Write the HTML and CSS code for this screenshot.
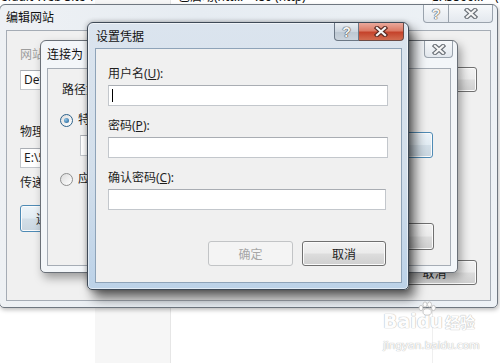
FILE: index.html
```html
<!DOCTYPE html>
<html lang="zh-CN">
<head>
<meta charset="UTF-8">
<meta name="viewport" content="width=device-width, initial-scale=1.0">
<title>设置凭据</title>
<link rel="stylesheet" href="styles.css">
</head>
<body>
    <!-- List view behind the dialogs -->
    <div class="listview">
        <div class="lv-col lv-col-a"></div>
        <div class="lv-col lv-col-b"></div>
        <div class="lv-col lv-col-c"></div>
        <div class="lv-col lv-col-d"></div>
    </div>
    <div class="lv-row">
        <span class="cell cell-name">Default Web Site</span>
        <span class="cell cell-id">1</span>
        <span class="cell cell-state">已启动(htt...</span>
        <span class="cell cell-bind">:80 (http)</span>
        <span class="cell cell-path">E:\5566...</span>
        <span class="cell">(</span>
    </div>

    <!-- 编辑网站 -->
    <div class="win win-edit">
        <div class="titlebar">
            <span class="title">编辑网站</span>
            <div class="controls">
                <span class="ctl ctl-help">?</span>
                <span class="ctl ctl-close">
                    <svg width="14" height="11" viewBox="0 0 14 11"><path d="M3 2 L11 9 M11 2 L3 9" class="x-outer"/><path d="M3 2 L11 9 M11 2 L3 9" class="x-inner"/></svg>
                </span>
            </div>
        </div>
        <div class="panel panel-edit">
            <div class="lbl lbl-dim">网站名称(<u>S</u>):</div>
            <div class="row row-site">
                <div class="textbox tb-site">Default Web Site</div>
                <button class="btn btn-pick">选择(<u>E</u>)...</button>
            </div>
            <div class="lbl lbl-path">物理路径(<u>P</u>):</div>
            <div class="textbox tb-path">E:\5566\web</div>
            <div class="lbl lbl-pass">传递身份验证</div>
            <div class="row row-connect">
                <button class="btn btn-focus btn-connect">连接为(<u>C</u>)...</button>
                <button class="btn btn-test">测试设置(<u>G</u>)...</button>
            </div>
            <div class="actions">
                <button class="btn btn-wide">确定</button>
                <button class="btn btn-wide">取消</button>
            </div>
        </div>
    </div>

    <!-- 连接为 -->
    <div class="win win-connect">
        <div class="titlebar titlebar-connect">
            <span class="title">连接为</span>
            <div class="controls">
                <span class="ctl ctl-close ctl-solo">
                    <svg width="14" height="11" viewBox="0 0 14 11"><path d="M3 2 L11 9 M11 2 L3 9" class="x-outer"/><path d="M3 2 L11 9 M11 2 L3 9" class="x-inner"/></svg>
                </span>
            </div>
        </div>
        <div class="panel panel-connect">
            <div class="lbl">路径凭据:</div>
            <div class="radio-row radio-first">
                <span class="radio radio-on"></span>
                <span>特定用户(<u>S</u>):</span>
            </div>
            <div class="row row-user">
                <div class="textbox tb-user"></div>
                <button class="btn btn-focus btn-set">设置(<u>E</u>)...</button>
            </div>
            <div class="radio-row radio-second">
                <span class="radio"></span>
                <span>应用程序用户(通过身份验证)(<u>A</u>)</span>
            </div>
            <div class="actions">
                <button class="btn btn-wide">确定</button>
                <button class="btn btn-wide">取消</button>
            </div>
        </div>
    </div>

    <!-- 设置凭据 (active) -->
    <div class="win win-cred">
        <div class="titlebar">
            <span class="title title-cred">设置凭据</span>
            <div class="controls">
                <span class="ctl ctl-help ctl-help-active">?</span>
                <span class="ctl ctl-close ctl-red">
                    <svg width="14" height="11" viewBox="0 0 14 11"><path d="M3 2 L11 9 M11 2 L3 9" class="x-outer x-outer-red"/><path d="M3 2 L11 9 M11 2 L3 9" class="x-inner"/></svg>
                </span>
            </div>
        </div>
        <div class="panel panel-cred">
            <div class="lbl">用户名(<u>U</u>):</div>
            <div class="textbox tb-cred"><span class="caret"></span></div>
            <div class="lbl lbl-next">密码(<u>P</u>):</div>
            <div class="textbox tb-cred"></div>
            <div class="lbl lbl-next">确认密码(<u>C</u>):</div>
            <div class="textbox tb-cred tb-confirm"></div>
            <div class="actions actions-cred">
                <button class="btn btn-wide" disabled>确定</button>
                <button class="btn btn-wide">取消</button>
            </div>
        </div>
    </div>

    <!-- Watermark -->
    <div class="watermark">
        <div class="wm-logo">
            <span class="wm-bai">Bai</span>
            <span class="wm-du">du
                <svg class="wm-paw" width="20" height="15" viewBox="0 0 20 15">
                    <ellipse cx="4" cy="7" rx="2" ry="2.6"/>
                    <ellipse cx="8" cy="3.5" rx="2" ry="2.6"/>
                    <ellipse cx="12.5" cy="3.5" rx="2" ry="2.6"/>
                    <ellipse cx="16.5" cy="7" rx="2" ry="2.6"/>
                    <ellipse cx="10.2" cy="11" rx="4.2" ry="3.2"/>
                </svg>
            </span>
            <span class="wm-jy">经验</span>
        </div>
        <div class="wm-url">jingyan.baidu.com</div>
    </div>
</body>
</html>
```

FILE: styles.css
```css
/* General Reset */
* {
    margin: 0;
    padding: 0;
    box-sizing: border-box;
}

body {
    width: 500px;
    height: 363px;
    position: relative;
    overflow: hidden;
    background-color: #fff;
    font-family: "Noto Sans", "Noto Sans CJK SC", sans-serif;
    font-size: 12px;
    line-height: 16px;
    color: #1e1e1e;
}

u {
    text-decoration: underline;
    text-underline-offset: 1px;
}

/* List view behind */
.listview {
    position: absolute;
    top: 0;
    left: 0;
    right: 0;
    bottom: 0;
    display: flex;
}

.lv-col {
    height: 100%;
}

.lv-col-a {
    width: 95px;
}

.lv-col-b {
    width: 76px;
    background-color: #f6f6f6;
    border-right: 1px solid #e6e6e6;
}

.lv-col-c {
    width: 262px;
    border-right: 1px solid #efefef;
}

.lv-col-d {
    flex: 1;
}

.lv-row {
    position: absolute;
    top: -11px;
    left: -8px;
    display: flex;
    white-space: nowrap;
    color: #111;
}

.cell-name { width: 96px; }
.cell-id { width: 90px; }
.cell-state { width: 77px; }
.cell-bind { width: 177px; }
.cell-path { width: 63px; }

/* Windows */
.win {
    position: absolute;
    display: flex;
    flex-direction: column;
    border: 1px solid #6f7780;
    border-radius: 6px 6px 5px 5px;
}

.win-edit {
    left: -1px;
    top: 4px;
    width: 499px;
    height: 304px;
    background: linear-gradient(90deg, #eef1f4, #e6ecf2 40%, #eef2f6);
    box-shadow: 1px 2px 4px rgba(0, 0, 0, 0.25);
}

.win-connect {
    left: 40px;
    top: 40px;
    width: 418px;
    height: 233px;
    background-color: #f3f6f9;
    border-color: #6a7078;
    box-shadow: 3px 5px 10px rgba(0, 0, 0, 0.35);
}

.win-cred {
    left: 87px;
    top: 22px;
    width: 322px;
    height: 268px;
    border-color: #3f4a57;
    background: linear-gradient(180deg, #dbe4ee 0%, #d3dfeb 55%, #bcd2e8 100%);
    box-shadow: inset 0 0 0 1px rgba(255, 255, 255, 0.55), 6px 8px 12px rgba(0, 0, 0, 0.6), 0 0 5px rgba(0, 0, 0, 0.3);
}

.titlebar {
    display: flex;
    height: 25px;
    flex: none;
}

.titlebar-connect {
    height: 27px;
}

.title {
    align-self: center;
    padding-left: 6px;
    color: #111;
}

.title-cred {
    padding-left: 8px;
    padding-top: 2px;
}

.controls {
    display: flex;
    align-self: flex-start;
    margin-left: auto;
    margin-right: 4px;
}

.ctl {
    display: flex;
    justify-content: center;
    align-items: center;
    height: 18px;
    border: 1px solid #9aa3ad;
    border-top: none;
    background: linear-gradient(#f7f9fb, #e3e8ee);
}

.ctl-help {
    width: 26px;
    border-radius: 0 0 0 4px;
    font-family: "Liberation Sans", sans-serif;
    font-size: 14px;
    font-weight: bold;
    color: #f4f4f4;
    text-shadow: 0 0 1px #4d4d4d, 0 0 1px #4d4d4d, 0 0 1px #4d4d4d;
}

.ctl-close {
    width: 44px;
    border-left: none;
    border-radius: 0 0 4px 0;
}

.ctl-solo {
    width: 29px;
    height: 17px;
    border-left: 1px solid #9aa3ad;
    border-radius: 0 0 4px 4px;
}

.ctl-help-active {
    width: 25px;
    border-color: #6b7785;
    background: linear-gradient(#e9eef3, #cdd6df 50%, #bcc7d2 51%, #cbd4dd);
}

.ctl-red {
    width: 45px;
    border-color: #6b4a45;
    background: linear-gradient(#eaa99c 0%, #dc7b66 45%, #c5432b 55%, #d26c50 100%);
}

.x-outer {
    fill: none;
    stroke: #6a7077;
    stroke-width: 4.4;
    stroke-linecap: square;
}

.x-outer-red {
    stroke: #5b2a22;
}

.x-inner {
    fill: none;
    stroke: #f6f6f6;
    stroke-width: 2.2;
    stroke-linecap: square;
}

/* Content panels */
.panel {
    flex: 1;
    display: flex;
    flex-direction: column;
    margin: 0 6px 6px 6px;
    background-color: #f0f0f0;
    border: 1px solid #a5acb5;
}

.panel-edit {
    padding: 16px 13px 15px 13px;
}

.panel-connect {
    padding: 13px 16px 15px 14px;
}

.panel-cred {
    margin-left: 7px;
    padding: 17px 15px 16px 12px;
    border-color: #8ea3b8;
}

.lbl {
    white-space: nowrap;
}

.lbl-dim {
    color: #9d9d9d;
}

.lbl-path {
    margin-top: 32px;
}

.lbl-pass {
    margin-top: 7px;
}

.lbl-next {
    margin-top: 12px;
}

.row {
    display: flex;
    align-items: center;
}

.row-site {
    margin-top: 4px;
}

.row-connect {
    margin-top: 14px;
    gap: 8px;
}

.row-user {
    margin-top: 4px;
    margin-left: 18px;
    gap: 8px;
}

.textbox {
    display: flex;
    align-items: center;
    height: 21px;
    padding-left: 3px;
    background-color: #fff;
    border: 1px solid #c3c7cc;
    border-top-color: #a9adb3;
    white-space: nowrap;
    overflow: hidden;
}

.tb-site {
    width: 200px;
    height: 20px;
}

.tb-path {
    width: 200px;
    height: 20px;
    margin-top: 8px;
}

.tb-user {
    width: 245px;
    height: 21px;
}

.tb-cred {
    width: 280px;
    margin-top: 3px;
}

.tb-confirm {
    width: 278px;
}

.caret {
    width: 1px;
    height: 13px;
    background-color: #000;
}

/* Buttons */
.btn {
    height: 25px;
    font-family: inherit;
    font-size: 12px;
    color: #1e1e1e;
    border: 1px solid #707070;
    border-radius: 3px;
    background: linear-gradient(#f2f2f2 0%, #ebebeb 49%, #dddddd 51%, #cfcfcf 100%);
    box-shadow: inset 0 0 0 1px #fbfbfb;
    white-space: nowrap;
}

.btn:disabled {
    color: #a6a6a6;
    border-color: #c2c4c6;
    background: #f4f4f4;
    box-shadow: none;
}

.btn-focus {
    border-color: #4f8bb5;
    background: linear-gradient(#edf4f9 0%, #e2ecf3 49%, #d3dfe8 51%, #c9d6e0 100%);
}

.btn-pick {
    width: 112px;
    margin-left: auto;
    padding-right: 30px;
}

.btn-connect {
    width: 76px;
    height: 27px;
    padding-left: 15px;
    text-align: left;
    overflow: hidden;
}

.btn-test {
    width: 96px;
    height: 27px;
}

.btn-set {
    width: 100px;
    height: 26px;
    padding-right: 24px;
}

.btn-wide {
    width: 85px;
}

.actions {
    display: flex;
    justify-content: flex-end;
    gap: 8px;
    margin-top: auto;
}

.panel-connect .actions .btn {
    height: 27px;
    width: 84px;
}

.actions-cred {
    gap: 9px;
}

.actions-cred .btn:last-child {
    width: 84px;
}

/* Radios */
.radio-row {
    display: flex;
    align-items: center;
    gap: 5px;
    margin-left: -2px;
    white-space: nowrap;
}

.radio-first {
    margin-top: 14px;
}

.radio-second {
    margin-top: 13px;
}

.radio {
    width: 13px;
    height: 13px;
    flex: none;
    display: flex;
    justify-content: center;
    align-items: center;
    border: 1px solid #8e8f8f;
    border-radius: 50%;
    background: linear-gradient(135deg, #dcdcdc, #ffffff);
}

.radio-on {
    border-color: #2c628b;
}

.radio-on::after {
    content: "";
    width: 5px;
    height: 5px;
    border-radius: 50%;
    background: radial-gradient(circle at 35% 35%, #8bc4ea, #1c5a8c);
}

/* Watermark */
.watermark {
    position: absolute;
    left: 383px;
    top: 304px;
    color: #fdfdfd;
    text-shadow: 0 0 1px #b9b9b9, 0 0 1px #b9b9b9;
}

.wm-logo {
    display: flex;
    align-items: flex-end;
    height: 28px;
    font-family: "DejaVu Sans", sans-serif;
    font-weight: bold;
}

.wm-bai,
.wm-du {
    font-size: 19px;
    line-height: 22px;
}

.wm-du {
    position: relative;
    letter-spacing: -1px;
}

.wm-paw {
    position: absolute;
    left: 0;
    top: -9px;
    fill: #fdfdfd;
    stroke: #bdbdbd;
    stroke-width: 0.8;
}

.wm-jy {
    margin-left: 3px;
    font-family: "Noto Sans CJK SC", sans-serif;
    font-size: 15px;
    line-height: 20px;
}

.wm-url {
    margin-top: 6px;
    font-family: "DejaVu Sans", sans-serif;
    font-size: 11px;
    letter-spacing: -0.3px;
}
```
